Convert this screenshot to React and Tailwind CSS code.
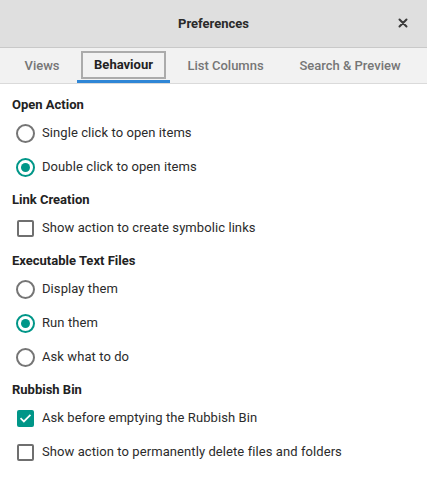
import React, { useState } from "react";

function Radio({ checked, label, onClick }) {
  return (
    <div className="flex items-center h-[34px] pl-[16px] cursor-pointer" onClick={onClick}>
      <span
        className={
          "w-[19px] h-[19px] rounded-full border-2 flex items-center justify-center shrink-0 " +
          (checked ? "border-[#009688]" : "border-[#757575]")
        }
      >
        {checked && <span className="w-[9px] h-[9px] rounded-full bg-[#009688]" />}
      </span>
      <span className="ml-[7px] text-[13px] tracking-[0.08px] text-[#2b2b2b]">{label}</span>
    </div>
  );
}

function Check({ checked, label, onClick }) {
  return (
    <div className="flex items-center h-[34px] pl-[17px] cursor-pointer" onClick={onClick}>
      <span
        className={
          "w-[17px] h-[17px] rounded-[2px] flex items-center justify-center shrink-0 " +
          (checked ? "bg-[#009688]" : "border-2 border-[#6f6f6f]")
        }
      >
        {checked && (
          <svg width="13" height="13" viewBox="0 0 24 24" fill="none" stroke="white" strokeWidth="3.2" strokeLinecap="square">
            <path d="M4 12.5l5 5L20 6.5" />
          </svg>
        )}
      </span>
      <span className="ml-[8px] text-[13px] tracking-[0.08px] text-[#2b2b2b]">{label}</span>
    </div>
  );
}

function Heading({ children, first }) {
  return (
    <div className={"h-[22px] flex items-center pl-[12px] text-[13px] font-bold text-[#222] " + (first ? "" : "mt-[5px]")}>
      {children}
    </div>
  );
}

export default function App() {
  const [openAction, setOpenAction] = useState("double");
  const [symlinks, setSymlinks] = useState(false);
  const [exec, setExec] = useState("run");
  const [askEmpty, setAskEmpty] = useState(true);
  const [permDelete, setPermDelete] = useState(false);

  const tabs = [
    { name: "Views", w: "w-[70px]" },
    { name: "Behaviour", w: "w-[93px]", active: true },
    { name: "List Columns", w: "w-[111px]" },
    { name: "Search & Preview", w: "w-[138px]" },
  ];

  return (
    <div className="w-[427px] h-[484px] bg-white flex flex-col" style={{ fontFamily: "Roboto, 'Noto Sans', sans-serif" }}>
      <header className="h-[48px] bg-[#dfdfdf] border-b border-[#c9c9c9] flex items-center relative">
        <div className="flex-1 text-center text-[13px] font-bold text-[#2a2a2a]">Preferences</div>
        <button className="absolute right-[17px] top-[16px] w-[14px] h-[14px] flex items-center justify-center">
          <svg width="10" height="10" viewBox="0 0 10 10" stroke="#3a3a3a" strokeWidth="2" strokeLinecap="round">
            <path d="M1.5 1.5l7 7M8.5 1.5l-7 7" />
          </svg>
        </button>
      </header>

      <nav className="h-[36px] bg-[#f2f2f2] border-b border-[#dadada] flex pl-[7px]">
        {tabs.map((t) => (
          <div
            key={t.name}
            className={
              t.w +
              " h-full flex items-center justify-center text-[13px] " +
              (t.active ? "border-b-[3px] border-[#2f86d6] px-[4px] pt-[2px]" : "font-medium text-[#767676]")
            }
          >
            {t.active ? (
              <div className="w-full h-[28px] border-2 border-[#ababab] flex items-center justify-center font-bold text-[#222]">
                {t.name}
              </div>
            ) : (
              t.name
            )}
          </div>
        ))}
      </nav>

      <main className="flex-1 pt-[10px]">
        <Heading first>Open Action</Heading>
        <Radio label="Single click to open items" checked={openAction === "single"} onClick={() => setOpenAction("single")} />
        <Radio label="Double click to open items" checked={openAction === "double"} onClick={() => setOpenAction("double")} />

        <Heading>Link Creation</Heading>
        <Check label="Show action to create symbolic links" checked={symlinks} onClick={() => setSymlinks(!symlinks)} />

        <Heading>Executable Text Files</Heading>
        <Radio label="Display them" checked={exec === "display"} onClick={() => setExec("display")} />
        <Radio label="Run them" checked={exec === "run"} onClick={() => setExec("run")} />
        <Radio label="Ask what to do" checked={exec === "ask"} onClick={() => setExec("ask")} />

        <Heading>Rubbish Bin</Heading>
        <Check label="Ask before emptying the Rubbish Bin" checked={askEmpty} onClick={() => setAskEmpty(!askEmpty)} />
        <Check
          label="Show action to permanently delete files and folders"
          checked={permDelete}
          onClick={() => setPermDelete(!permDelete)}
        />
      </main>
    </div>
  );
}
